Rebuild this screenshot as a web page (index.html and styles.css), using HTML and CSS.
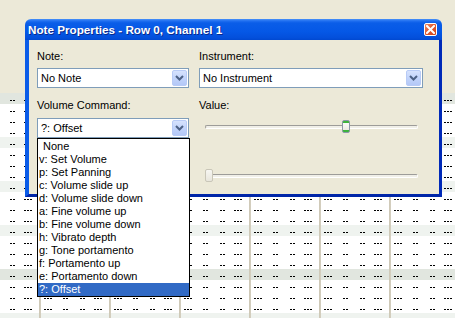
FILE: index.html
```html
<!DOCTYPE html>
<html>
<head>
  <meta charset="UTF-8">
  <title>Note Properties</title>
  <link rel="stylesheet" href="styles.css">
</head>
<body>
  <div class="screen">
    <!-- empty toolbar area above the pattern -->
    <div class="toolbar"></div>

    <!-- Pattern editor rows -->
    <div class="pattern">
      <div class="row dark"></div>
      <div class="row"></div>
      <div class="row"></div>
      <div class="row"></div>
      <div class="row light"></div>
      <div class="row"></div>
      <div class="row"></div>
      <div class="row"></div>
      <div class="row light"></div>
      <div class="row"></div>
      <div class="row"></div>
      <div class="row"></div>
      <div class="row light"></div>
      <div class="row"></div>
      <div class="row"></div>
      <div class="row"></div>
      <div class="row dark"></div>
      <div class="row"></div>
      <div class="row"></div>
      <div class="row"></div>
      <div class="row light"></div>
    </div>

    <!-- Note Properties dialog -->
    <div class="dialog">
      <div class="titlebar">
        <span class="title">Note Properties - Row 0, Channel 1</span>
        <span class="close-btn">
          <svg width="9" height="9" viewBox="0 0 9 9"><path d="M1 1 L8 8 M8 1 L1 8" stroke="#fff" stroke-width="2" stroke-linecap="square"/></svg>
        </span>
      </div>
      <div class="dialog-body">
        <div class="col">
          <label class="field-label">Note:</label>
          <div class="combo">
            <span class="combo-text">No Note</span>
            <span class="combo-btn"><svg width="9" height="6" viewBox="0 0 9 6"><path d="M1 1 L4.5 4.5 L8 1" fill="none" stroke="#4d6185" stroke-width="2"/></svg></span>
          </div>

          <label class="field-label second">Volume Command:</label>
          <div class="combo open">
            <span class="combo-text">?: Offset</span>
            <span class="combo-btn"><svg width="9" height="6" viewBox="0 0 9 6"><path d="M1 1 L4.5 4.5 L8 1" fill="none" stroke="#4d6185" stroke-width="2"/></svg></span>

            <!-- open dropdown list -->
            <ul class="droplist">
              <li class="indent">None</li>
              <li>v: Set Volume</li>
              <li>p: Set Panning</li>
              <li>c: Volume slide up</li>
              <li>d: Volume slide down</li>
              <li>a: Fine volume up</li>
              <li>b: Fine volume down</li>
              <li>h: Vibrato depth</li>
              <li>g: Tone portamento</li>
              <li>f: Portamento up</li>
              <li>e: Portamento down</li>
              <li class="selected">?: Offset</li>
            </ul>
          </div>
        </div>

        <div class="col">
          <label class="field-label">Instrument:</label>
          <div class="combo">
            <span class="combo-text">No Instrument</span>
            <span class="combo-btn"><svg width="9" height="6" viewBox="0 0 9 6"><path d="M1 1 L4.5 4.5 L8 1" fill="none" stroke="#4d6185" stroke-width="2"/></svg></span>
          </div>

          <label class="field-label second">Value:</label>
          <div class="slider">
            <div class="track"></div>
            <div class="thumb" style="left: 137px"></div>
          </div>

          <div class="slider disabled">
            <div class="track"></div>
            <div class="thumb" style="left: 0px"></div>
          </div>
        </div>
      </div>
    </div>
  </div>
</body>
</html>
```

FILE: styles.css
```css
* { box-sizing: border-box; }
body {
  margin: 0;
  font-family: "Liberation Sans", Arial, sans-serif;
  font-size: 11px;
  background-color: #ece9d8;
}
.screen {
  position: relative;
  width: 455px;
  height: 318px;
  overflow: hidden;
  background-color: #ece9d8;
}
.toolbar {
  height: 93px;
}

/* Pattern rows: column bars + dotted empty cells */
.row {
  height: 11px;
  background-color: #fff;
  background-image:
    linear-gradient(90deg, #d6d0bf 0, #c9c3b1 1px, #ddd8ca 2px, transparent 2px),
    linear-gradient(90deg,
      transparent 0 5px, #000 5px 7px, transparent 7px 8px, #000 8px 10px, transparent 10px 11px, #000 11px 13px,
      transparent 13px 24px, #000 24px 26px, transparent 26px 27px, #000 27px 29px,
      transparent 29px 41px, #000 41px 43px, transparent 43px 44px, #000 44px 46px,
      transparent 46px 55px, #000 55px 57px, transparent 57px 58px, #000 58px 60px, transparent 60px 61px, #000 61px 63px,
      transparent 63px 70px);
  background-size: 70px 11px, 70px 1px;
  background-position: 39px 0, 39px 7px;
  background-repeat: repeat-x;
}
.row.light { background-color: #eff3ef; }
.row.dark { background-color: #e1e6df; }

/* Dialog window */
.dialog {
  position: absolute;
  left: 25px;
  top: 19px;
  width: 417px;
  height: 178px;
  display: flex;
  flex-direction: column;
}
.titlebar {
  height: 21px;
  display: flex;
  align-items: center;
  justify-content: space-between;
  padding: 0 5px 0 3px;
  border-radius: 6px 6px 0 0;
  background: linear-gradient(#4a92f8 0, #1f6ef0 2px, #0a5de8 4px, #0558e6 60%, #034fdb 90%, #0048d0 100%);
}
.title {
  color: #fff;
  font-weight: bold;
  font-size: 11.7px;
  text-shadow: 1px 1px 0 #0a2a8a;
}
.close-btn {
  width: 13px;
  height: 13px;
  border: 1px solid #fff;
  border-radius: 2px;
  background: linear-gradient(135deg, #ed8b68 0, #e1552b 50%, #cc4620 100%);
  display: flex;
  align-items: center;
  justify-content: center;
}
.close-btn svg { display: block; }
.dialog-body {
  flex: 1;
  background-color: #ece9d8;
  border-left: 4px solid #0a5ce8;
  border-right: 3px solid #0029b8;
  border-bottom: 3px solid #0026a8;
  padding: 10px 16px 0 8px;
  display: grid;
  grid-template-columns: 152px 224px;
  column-gap: 10px;
  align-items: start;
}
.col {
  display: flex;
  flex-direction: column;
}
.field-label {
  display: block;
  line-height: 13px;
  height: 13px;
  color: #000;
  margin-bottom: 5px;
}
.field-label.second {
  margin-top: 11px;
  margin-bottom: 6px;
}

/* XP style combo box */
.combo {
  position: relative;
  height: 20px;
  border: 1px solid #7f9db9;
  background-color: #fff;
  display: flex;
  align-items: center;
  padding: 1px;
}
.combo-text {
  flex: 1;
  padding-left: 2px;
  color: #000;
}
.combo-btn {
  width: 15px;
  height: 16px;
  border: 1px solid #b8cbf6;
  border-radius: 2px;
  background: linear-gradient(#d6e2fd, #c2d4fb 50%, #b4c8f7);
  display: flex;
  align-items: center;
  justify-content: center;
}
.combo-btn svg { display: block; }

.droplist {
  position: absolute;
  left: -1px;
  top: 19px;
  width: 153px;
  margin: 0;
  padding: 1px 0 0;
  list-style: none;
  background-color: #fff;
  border: 1px solid #000;
  z-index: 2;
}
.droplist li {
  height: 13px;
  line-height: 13px;
  padding-left: 1px;
  color: #000;
  white-space: nowrap;
}
.droplist li.indent { padding-left: 5px; }
.droplist li.selected {
  background-color: #316ac5;
  color: #fff;
}

/* XP trackbar */
.slider {
  position: relative;
  height: 20px;
  margin: 0 5px 0 6px;
}
.slider.disabled { margin-top: 29px; }
.track {
  position: absolute;
  left: 0;
  right: 0;
  top: 7px;
  height: 4px;
  border-top: 1px solid #9d9c99;
  border-left: 1px solid #9d9c99;
  border-bottom: 1px solid #fff;
  border-right: 1px solid #fff;
  border-radius: 2px;
  background-color: #f0efe8;
}
.thumb {
  position: absolute;
  top: 2px;
  width: 8px;
  height: 13px;
  border: 1px solid #8c97a8;
  border-radius: 2px;
  background: linear-gradient(#3cb33c 0 2px, #fbfbf9 2px, #eceae3 calc(100% - 2px), #3cb33c calc(100% - 2px));
}
.slider.disabled .thumb {
  border-color: #c9c6b8;
  background: linear-gradient(#f7f6f2, #e8e6dc);
}
```
